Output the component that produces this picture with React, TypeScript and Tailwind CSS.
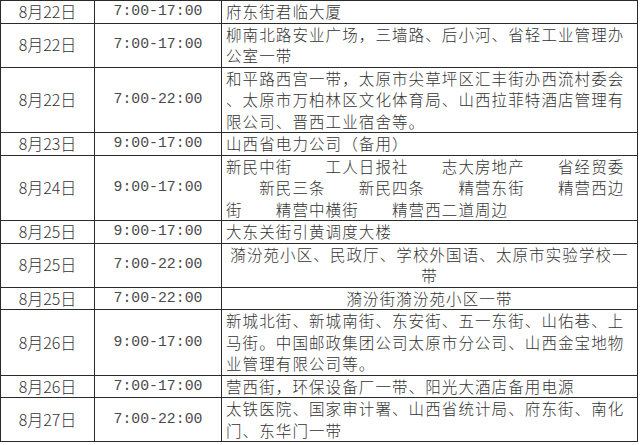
const rows = [
  { date: "8月22日", time: "7:00-17:00", lines: ["府东街君临大厦"] },
  {
    date: "8月22日",
    time: "7:00-17:00",
    lines: ["柳南北路安业广场，三墙路、后小河、省轻工业管理办", "公室一带"],
  },
  {
    date: "8月22日",
    time: "7:00-22:00",
    lines: [
      "和平路西宫一带，太原市尖草坪区汇丰街办西流村委会",
      "、太原市万柏林区文化体育局、山西拉菲特酒店管理有",
      "限公司、晋西工业宿舍等。",
    ],
  },
  { date: "8月23日", time: "9:00-17:00", lines: ["山西省电力公司（备用）"] },
  {
    date: "8月24日",
    time: "9:00-17:00",
    lines: [
      "新民中街　　工人日报社　　志大房地产　　省经贸委",
      "　　新民三条　　新民四条　　精营东街　　精营西边",
      "街　　精营中横街　　精营西二道周边",
    ],
  },
  { date: "8月25日", time: "9:00-17:00", lines: ["大东关街引黄调度大楼"] },
  {
    date: "8月25日",
    time: "7:00-22:00",
    lines: ["漪汾苑小区、民政厅、学校外国语、太原市实验学校一", "带"],
    center: true,
  },
  { date: "8月25日", time: "7:00-22:00", lines: ["漪汾街漪汾苑小区一带"], center: true },
  {
    date: "8月26日",
    time: "9:00-17:00",
    lines: [
      "新城北街、新城南街、东安街、五一东街、山佑巷、上",
      "马街。中国邮政集团公司太原市分公司、山西金宝地物",
      "业管理有限公司等。",
    ],
  },
  { date: "8月26日", time: "7:00-17:00", lines: ["营西街，环保设备厂一带、阳光大酒店备用电源"] },
  {
    date: "8月27日",
    time: "7:00-22:00",
    lines: ["太铁医院、国家审计署、山西省统计局、府东街、南化", "门、东华门一带"],
  },
];

const App = () => {
  return (
    <div className="w-[640px] h-[445px] bg-white overflow-hidden">
      <table className="w-[637px] border-collapse table-fixed text-[#333] text-[15.5px] font-light leading-[21.5px] font-['Noto_Sans_CJK_SC',sans-serif]">
        <colgroup>
          <col className="w-[94px]" />
          <col className="w-[127px]" />
          <col className="w-[416px]" />
        </colgroup>
        <tbody>
          {rows.map((row, i) => (
            <tr key={i}>
              {/* Date */}
              <td className="border border-[#2a2a2a] p-0 text-center align-middle text-[16px]">{row.date}</td>
              {/* Time */}
              <td className="border border-[#2a2a2a] p-0 text-center align-middle font-['Liberation_Mono',monospace] font-normal text-[14.8px] text-[#4a4a4a]">
                {row.time}
              </td>
              {/* Area */}
              <td
                className={
                  row.center
                    ? "border border-[#2a2a2a] py-0 px-1 align-middle text-center tracking-[1.1px] whitespace-pre"
                    : "border border-[#2a2a2a] py-0 pl-[4px] pr-1 align-middle text-left tracking-[1.1px] whitespace-pre"
                }
              >
                {row.lines.map((line, j) => (
                  <div key={j}>{line}</div>
                ))}
              </td>
            </tr>
          ))}
        </tbody>
      </table>
    </div>
  );
};

export default App;
